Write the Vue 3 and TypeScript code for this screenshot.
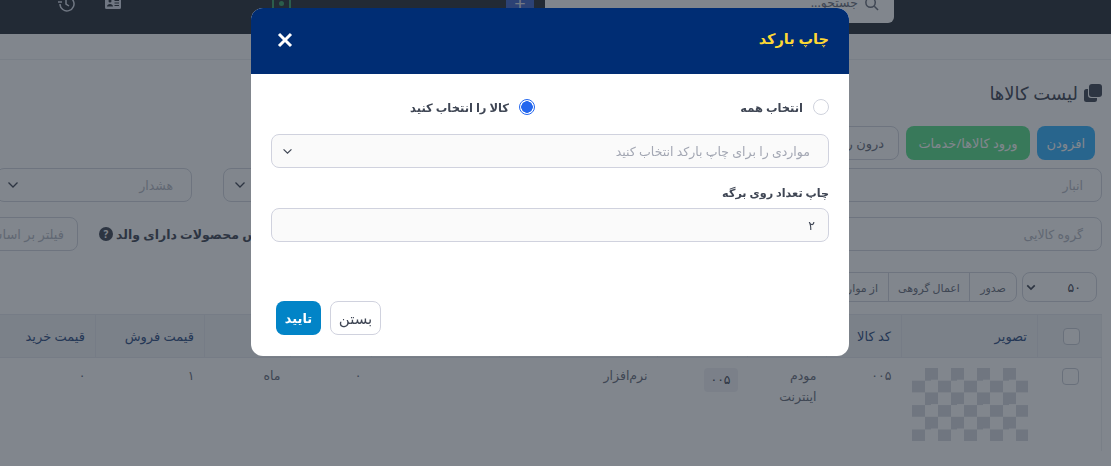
<script setup lang="ts">
const columns: string[] = ['', 'تصویر', 'کد کالا', 'نام', 'بارکد', 'دسته', 'برند', 'موجودی', 'واحد', 'قیمت فروش', 'قیمت خرید']
</script>

<template>
  <div class="page">
    <header class="topbar">
      <div class="search">
        <svg class="search-icon" viewBox="0 0 16 16" width="15" height="15" fill="none" stroke="currentColor" stroke-width="1.6"><circle cx="7" cy="7" r="5" /><path d="M11 11l4 4" /></svg>
        <span>جستجو...</span>
      </div>
      <div class="plus-btn">+</div>
      <div class="green-box"><i></i></div>
      <svg class="id-icon" viewBox="0 0 16 12" width="16" height="12" fill="currentColor"><path fill-rule="evenodd" d="M1.5 0h13A1.5 1.5 0 0 1 16 1.500v9a1.500 1.500 0 0 1-1.500 1.500h-13A1.500 1.500 0 0 1 0 10.500v-9A1.500 1.500 0 0 1 1.500 0zM5 2.500a1.500 1.500 0 1 0 0 3 1.500 1.500 0 0 0 0-3zM2 9.500c0-1.500 1.300-2.500 3-2.500s3 1 3 2.500zM9.500 3v1H14V3zm0 2.500v1H14v-1zm0 2.500v1H14V8z" /></svg>
      <svg class="history-icon" viewBox="0 0 18 18" width="18" height="18" fill="none" stroke="currentColor" stroke-width="1.500"><path d="M3 10a7 7 0 1 0 2-5" /><path d="M9 5v5l3 2" /><path d="M1 8h4" /></svg>
    </header>
    <div class="crumb"></div>

    <main class="main">
      <h1 class="title">
        <svg viewBox="0 0 18 18" width="18" height="18" fill="currentColor"><rect x="5" y="0" width="13" height="13" rx="3" /><path d="M0 7.500A2.500 2.500 0 0 1 2.500 5H4v6a3 3 0 0 0 3 3h6v1.500a2.500 2.500 0 0 1-2.500 2.500h-8A2.500 2.500 0 0 1 0 15.500z" /></svg>
        <span>لیست کالاها</span>
      </h1>

      <div class="actions">
        <button class="btn btn-blue">افزودن</button>
        <button class="btn btn-green">ورود کالاها/خدمات</button>
        <button class="btn btn-line">درون ریزی کالاها</button>
      </div>

      <div class="filters">
        <div class="field f-store"><span>انبار</span></div>
        <div class="field f-blank"><svg class="chev" viewBox="0 0 12 8" width="12" height="8" fill="none" stroke="currentColor" stroke-width="1.300"><path d="M1.500 1.500L6 6l4.500-4.500" /></svg></div>
        <div class="field f-warn"><span>هشدار</span><svg class="chev" viewBox="0 0 12 8" width="12" height="8" fill="none" stroke="currentColor" stroke-width="1.300"><path d="M1.500 1.500L6 6l4.500-4.500" /></svg></div>
      </div>

      <div class="filters second">
        <div class="field f-group"><span>گروه کالایی</span></div>
        <div class="parent-flag">
          <b>نمایش محصولات دارای والد</b>
          <span class="help">?</span>
        </div>
        <div class="field f-filter"><span>فیلتر بر اساس تاریخ</span></div>
      </div>

      <div class="tools">
        <div class="per-page">
          <span>۵۰</span>
          <svg viewBox="0 0 12 8" width="10" height="7" fill="none" stroke="currentColor" stroke-width="2"><path d="M1.500 1.500L6 6l4.500-4.500" /></svg>
        </div>
        <div class="group">
          <span>صدور</span>
          <span>اعمال گروهی</span>
          <span>از موارد انتخاب شده</span>
        </div>
      </div>

      <table class="grid">
        <colgroup>
          <col class="c1" /><col class="c2" /><col class="c3" /><col class="c4" /><col class="c5" /><col class="c6" /><col class="c7" /><col class="c8" /><col class="c9" /><col class="c10" /><col class="c11" />
        </colgroup>
        <thead>
          <tr>
            <th v-for="(c, i) in columns" :key="i">
              <span v-if="i === 0" class="check"></span>
              <template v-else>{{ c }}</template>
            </th>
          </tr>
        </thead>
        <tbody>
          <tr>
            <td><span class="check"></span></td>
            <td class="image-cell"><div class="checker"></div></td>
            <td>۰۰۵</td>
            <td>مودم اینترنت</td>
            <td class="chip-cell"><span class="chip">۰۰۵</span></td>
            <td>نرم‌افزار</td>
            <td></td>
            <td>۰</td>
            <td>ماه</td>
            <td>۱</td>
            <td>۰</td>
          </tr>
        </tbody>
      </table>
    </main>

    <div class="backdrop"></div>
    <div class="modal-wrap">
      <section class="modal">
        <header class="modal-head">
          <h2>چاپ بارکد</h2>
          <svg class="close" viewBox="0 0 16 16" width="16" height="16" fill="none" stroke="currentColor" stroke-width="3"><path d="M2 2l12 12M14 2L2 14" /></svg>
        </header>
        <div class="modal-body">
          <div class="radios">
            <label class="radio"><span class="dot"></span>انتخاب همه</label>
            <label class="radio"><span class="dot on"></span>کالا را انتخاب کنید</label>
          </div>
          <div class="control">
            <span class="placeholder">مواردی را برای چاپ بارکد انتخاب کنید</span>
            <svg viewBox="0 0 12 8" width="11" height="7" fill="none" stroke="currentColor" stroke-width="1.400"><path d="M1.500 1.500L6 6l4.500-4.500" /></svg>
          </div>
          <div class="label">چاپ تعداد روی برگه</div>
          <div class="control value"><span>۲</span></div>
        </div>
        <footer class="modal-foot">
          <button class="m-btn ghost">بستن</button>
          <button class="m-btn primary">تایید</button>
        </footer>
      </section>
    </div>
  </div>
</template>

<style scoped>
.page {
  direction: rtl;
  width: 1111px;
  height: 466px;
  overflow: hidden;
  background: #fff;
  color: #666c7a;
  font-family: "Noto Sans", "DejaVu Sans", sans-serif;
  font-size: 12.500px;
  position: relative;
}
.topbar {
  height: 34px;
  background: #232a33;
  display: flex;
  align-items: flex-end;
  overflow: hidden;
  box-sizing: border-box;
  padding-bottom: 11px;
}
.search {
  flex: 0 0 349px;
  height: 40px;
  margin-right: 217px;
  background: #fff;
  border-radius: 0 0 6px 6px;
  display: flex;
  align-items: flex-end;
  padding: 0 15px 12px;
  box-sizing: border-box;
  gap: 6px;
  color: #666c7a;
}
.search-icon { flex: none; }
.plus-btn {
  flex: 0 0 28px;
  height: 40px;
  margin-right: 11px;
  background: #3a62c8;
  color: #d8dde8;
  text-align: center;
  line-height: 40px;
  font-size: 20px;
  border-radius: 4px;
}
.green-box {
  flex: 0 0 19px;
  height: 30px;
  margin-right: 215px;
  box-sizing: border-box;
  border: 2px solid #38a169;
  border-radius: 3px;
  position: relative;
}
.green-box i {
  position: absolute;
  left: 5px;
  top: 6px;
  width: 5px;
  height: 5px;
  border-radius: 50%;
  background: #38a169;
}
.id-icon {
  flex: none;
  margin-right: 151px;
  margin-bottom: 14px;
  color: #d8dde8;
}
.history-icon {
  flex: none;
  margin-right: 30px;
  margin-bottom: 11px;
  color: #d8dde8;
}
.crumb {
  height: 25px;
  border-bottom: 1px solid #eceef2;
}
.main { padding: 21px 9px 0 0; }
.title {
  margin: 0;
  height: 24px;
  display: flex;
  align-items: center;
  gap: 6px;
  font-size: 18px;
  font-weight: 400;
  color: #3c4351;
}
.title svg { flex: none; }
.actions {
  margin: 21px 7px 0 0;
  display: flex;
  gap: 7px;
}
.btn {
  flex: none;
  height: 34px;
  border-radius: 8px;
  border: 1px solid transparent;
  color: #fff;
  font: inherit;
  font-size: 13px;
  padding: 0 9px;
  box-sizing: border-box;
}
.btn-blue { background: #31b3ff; width: 58px; }
.btn-green { background: #56e189; width: 124px; }
.btn-line { background: #fff; border-color: #d3d6de; color: #666c7a; width: 120px; }
.filters {
  margin-top: 8px;
  display: flex;
}
.second {
  margin-top: 15px;
  align-items: center;
}
.field {
  flex: none;
  height: 34px;
  box-sizing: border-box;
  background: #fff;
  border: 1px solid #d3d6de;
  border-radius: 8px;
  display: flex;
  align-items: center;
  justify-content: space-between;
  padding: 0 18px 0 10px;
  color: #b4b8c2;
}
.chev { color: #3c4351; flex: none; margin-right: auto; }
.f-store { width: 420px; }
.f-blank { width: 428px; margin-right: 31px; }
.f-warn { width: 196px; margin-right: 31px; }
.f-group { width: 700px; }
.parent-flag {
  flex: none;
  width: 303px;
  display: flex;
  align-items: center;
  justify-content: flex-end;
  gap: 3px;
  white-space: nowrap;
  color: #3c4351;
  font-size: 12.500px;
}
.parent-flag b { font-weight: 700; }
.help {
  flex: none;
  width: 14px;
  height: 14px;
  border-radius: 50%;
  background: #3c4351;
  color: #fff;
  font-size: 10px;
  font-weight: 700;
  line-height: 14px;
  text-align: center;
}
.f-filter {
  width: 120px;
  margin-right: 21px;
  padding-right: 13px;
  white-space: nowrap;
  font-size: 13px;
}
.tools {
  margin: 21px 5px 0 0;
  display: flex;
  gap: 5px;
  height: 30px;
}
.per-page {
  flex: 0 0 75px;
  box-sizing: border-box;
  border: 1px solid #d3d6de;
  border-radius: 8px;
  display: flex;
  align-items: center;
  justify-content: space-between;
  padding: 0 15px 0 3px;
  color: #3c4351;
}
.group {
  flex: none;
  display: flex;
  border: 1px solid #d3d6de;
  border-radius: 8px;
  font-size: 11px;
  white-space: nowrap;
}
.group span {
  display: flex;
  align-items: center;
  padding: 0 10px;
  border-left: 1px solid #d3d6de;
}
.group span:nth-child(1) { width: 47px; box-sizing: border-box; justify-content: center; padding: 0; }
.group span:nth-child(2) { width: 81px; box-sizing: border-box; justify-content: center; padding: 0; }
.grid {
  margin-top: 12px;
  width: 1142px;
  table-layout: fixed;
  border-collapse: collapse;
  border-right: 1px solid #eceef2;
}
.c1 { width: 64px; }
.c2 { width: 136px; }
.c3 { width: 75px; }
.c4 { width: 79px; }
.c5 { width: 90px; }
.c6 { width: 158px; }
.c7 { width: 128px; }
.c8 { width: 81px; }
.c9 { width: 86px; }
.c10 { width: 109px; }
.c11 { width: 136px; }
.grid th {
  height: 43px;
  box-sizing: border-box;
  padding: 0 10px;
  background: #f1f3f6;
  border: 1px solid #e6e8ee;
  border-width: 1px 0 1px 1px;
  color: #2b4a80;
  font-size: 13px;
  font-weight: 400;
  text-align: right;
  white-space: nowrap;
}
.grid td {
  vertical-align: top;
  padding: 7px 10px;
  text-align: right;
  line-height: 21px;
}
.grid th:first-child, .grid td:first-child {
  text-align: center;
  padding-left: 13px;
  padding-right: 10px;
}
.grid td:first-child { padding-top: 10px; line-height: 17px; }
.check {
  display: block;
  margin: 0 auto;
  width: 17px;
  height: 17px;
  box-sizing: border-box;
  border: 1px solid #c8ccd6;
  border-radius: 4px;
  background: #fff;
}
.grid td.image-cell { padding: 10px; }
.checker {
  width: 116px;
  height: 73px;
  background: conic-gradient(#d8dbe2 25%, #fff 0 50%, #d8dbe2 0 75%, #fff 0) top left / 26px 24.400px;
}
.grid td.chip-cell { padding: 10px; }
.chip {
  display: block;
  width: 34px;
  height: 24px;
  line-height: 24px;
  text-align: center;
  border-radius: 4px;
  background: #f1f2f5;
  color: #3c4351;
}
.backdrop {
  position: fixed;
  inset: 0;
  background: rgb(33, 42, 55);
  opacity: 0.57;
}
.modal-wrap {
  position: fixed;
  inset: 8px 0 auto 0;
  display: flex;
  justify-content: center;
}
.modal {
  width: 598px;
  height: 348px;
  margin-right: 11px;
  background: #fff;
  border-radius: 12px;
  overflow: hidden;
  display: flex;
  flex-direction: column;
  color: #3f4654;
}
.modal-head {
  flex: 0 0 66px;
  background: #002d74;
  display: flex;
  align-items: center;
  justify-content: space-between;
  padding: 0 20px 3px 26px;
  box-sizing: border-box;
}
.modal-head h2 {
  margin: -3px 0 0;
  font-size: 14.500px;
  font-weight: 700;
  color: #fdd835;
}
.close { color: #fff; }
.modal-body {
  flex: 1;
  padding: 24px 20px 0;
  box-sizing: border-box;
}
.radios {
  display: grid;
  grid-template-columns: 294px 1fr;
  height: 18px;
}
.radio {
  display: flex;
  align-items: center;
  gap: 10px;
  font-size: 11.500px;
  font-weight: 700;
  white-space: nowrap;
}
.dot {
  flex: none;
  width: 16px;
  height: 16px;
  box-sizing: border-box;
  border: 1px solid #cfd2dc;
  border-radius: 50%;
}
.dot.on {
  border: 1px solid #2467ee;
  background: radial-gradient(circle, #2467ee 5.500px, #fff 6px);
}
.control {
  height: 34px;
  margin-top: 18px;
  box-sizing: border-box;
  background: #fafafa;
  border: 1px solid #d0d2de;
  border-radius: 8px;
  display: flex;
  align-items: center;
  justify-content: space-between;
  padding: 0 18px 0 10px;
}
.placeholder { color: #a3a7b3; font-size: 12.500px; }
.label {
  margin-top: 16px;
  height: 18px;
  line-height: 18px;
  font-weight: 700;
  font-size: 11.200px;
}
.value {
  margin-top: 6px;
  padding-right: 13px;
}
.modal-foot {
  flex: none;
  display: flex;
  justify-content: flex-end;
  gap: 9px;
  padding: 0 0 21px 25px;
}
.m-btn {
  height: 34px;
  border-radius: 8px;
  font: inherit;
  font-size: 13px;
  box-sizing: border-box;
  padding: 0;
}
.ghost {
  width: 51px;
  background: #fff;
  border: 1px solid #d0d2de;
  color: #3f4654;
  font-size: 15px;
}
.primary {
  width: 45px;
  background: #0284c7;
  border: 0;
  color: #fff;
  font-weight: 700;
}
</style>

<style>
html, body { margin: 0; padding: 0; }
</style>
